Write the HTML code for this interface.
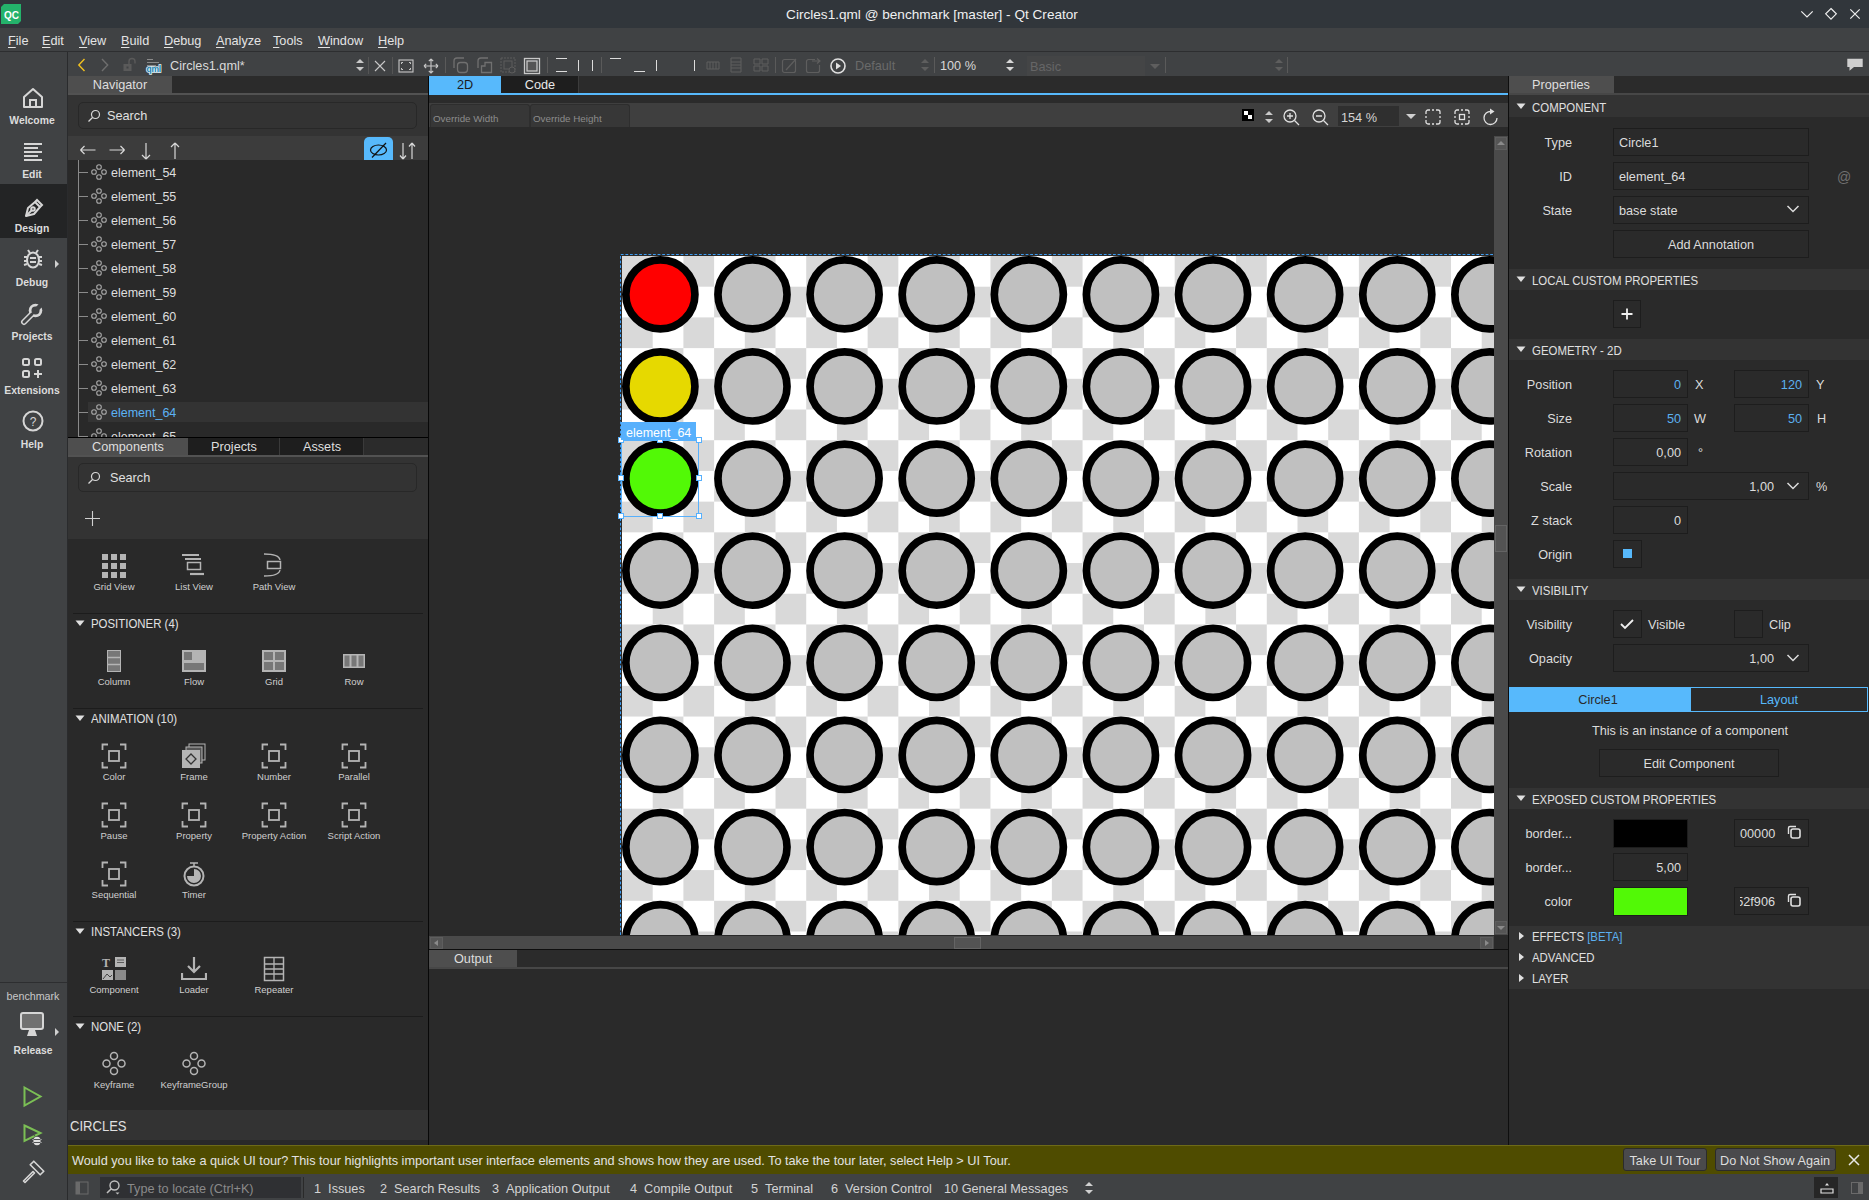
<!DOCTYPE html><html><head><meta charset="utf-8"><style>
html,body{margin:0;padding:0;width:1869px;height:1200px;overflow:hidden;background:#2a2a2a;font-family:"Liberation Sans",sans-serif;}
.a{position:absolute;}
.t{position:absolute;white-space:nowrap;line-height:20px;height:20px;}
u{text-decoration-thickness:1px;text-underline-offset:2px;}
</style></head><body>
<div class="a" style="left:0px;top:0px;width:1869px;height:28px;background:#31363b;"></div>
<svg class="a" style="left:1px;top:4px;" width="20" height="20" viewBox="0 0 20 20"><path d="M3 0 H20 V17 L17 20 H0 V3 Z" fill="#24b36b"/><text x="3" y="15" font-size="11.5" font-family="Liberation Sans" font-weight="bold" textLength="15" lengthAdjust="spacingAndGlyphs" fill="#ffffff">QC</text></svg>
<div class="t" style="left:632px;width:600px;text-align:center;top:5px;font-size:13.6px;color:#eff0f1;">Circles1.qml @ benchmark [master] - Qt Creator</div>
<svg class="a" style="left:1798px;top:8px;" width="16" height="12" viewBox="0 0 16 12"><path d="M3.3 3.3 L9 9 L14.7 3.3" stroke="#eeeeee" stroke-width="1.2" fill="none"/></svg>
<svg class="a" style="left:1822px;top:6px;" width="18" height="16" viewBox="0 0 18 16"><path d="M9 2.5 L14.3 7.8 L9 13.1 L3.7 7.8 Z" stroke="#eeeeee" stroke-width="1.2" fill="none"/></svg>
<svg class="a" style="left:1846px;top:6px;" width="18" height="16" viewBox="0 0 18 16"><path d="M4.3 3.3 L13.7 12.7 M13.7 3.3 L4.3 12.7" stroke="#eeeeee" stroke-width="1.2" fill="none"/></svg>
<div class="a" style="left:0px;top:28px;width:1869px;height:24px;background:#404244;"></div>
<div class="a" style="left:0px;top:51px;width:1869px;height:1px;background:#2d2e30;"></div>
<div class="t" style="left:8px;top:31px;font-size:12.7px;color:#e4e4e4;"><u>F</u>ile</div>
<div class="t" style="left:42px;top:31px;font-size:12.7px;color:#e4e4e4;"><u>E</u>dit</div>
<div class="t" style="left:79px;top:31px;font-size:12.7px;color:#e4e4e4;"><u>V</u>iew</div>
<div class="t" style="left:121px;top:31px;font-size:12.7px;color:#e4e4e4;"><u>B</u>uild</div>
<div class="t" style="left:164px;top:31px;font-size:12.7px;color:#e4e4e4;"><u>D</u>ebug</div>
<div class="t" style="left:216px;top:31px;font-size:12.7px;color:#e4e4e4;"><u>A</u>nalyze</div>
<div class="t" style="left:273px;top:31px;font-size:12.7px;color:#e4e4e4;"><u>T</u>ools</div>
<div class="t" style="left:318px;top:31px;font-size:12.7px;color:#e4e4e4;"><u>W</u>indow</div>
<div class="t" style="left:378px;top:31px;font-size:12.7px;color:#e4e4e4;"><u>H</u>elp</div>
<div class="a" style="left:0px;top:52px;width:1869px;height:24px;background:#404244;"></div>
<div class="a" style="left:67px;top:52px;width:1px;height:24px;background:#2d2e30;"></div>
<svg class="a" style="left:75px;top:58px;" width="14" height="14" viewBox="0 0 14 14"><path d="M9.5 1 L3.8 7 L9.5 13" stroke="#f0c020" stroke-width="1.4" fill="none"/></svg>
<svg class="a" style="left:98px;top:58px;" width="14" height="14" viewBox="0 0 14 14"><path d="M4 1 L9.7 7 L4 13" stroke="#6e6e6e" stroke-width="1.4" fill="none"/></svg>
<svg class="a" style="left:122px;top:57px;" width="16" height="16" viewBox="0 0 16 16"><rect x="1.5" y="7" width="8" height="7" fill="#5a5a5a"/><rect x="4.5" y="9.5" width="2" height="2" fill="#404244"/><path d="M7 7 V4.5 A3 3 0 0 1 13 4.5 V6.5" stroke="#5a5a5a" stroke-width="1.4" fill="none"/></svg>
<svg class="a" style="left:145px;top:57px;" width="22" height="18" viewBox="0 0 22 18"><path d="M2 2.5 H8 M2 5.5 H14 M2 8.5 H11" stroke="#8a8a8a" stroke-width="1"/><text x="1.5" y="14.5" font-size="8.5" font-weight="bold" font-family="Liberation Sans" fill="#1a7fae" stroke="#dff1f8" stroke-width="1.6" paint-order="stroke" letter-spacing="-0.3">qml</text></svg>
<div class="t" style="left:170px;top:56px;font-size:12.7px;color:#dadada;">Circles1.qml*</div>
<svg class="a" style="left:354px;top:58px;" width="12" height="14" viewBox="0 0 12 14"><path d="M6 1 L10 5 H2 Z M6 13 L10 9 H2 Z" fill="#c8c8c8"/></svg>
<div class="a" style="left:368px;top:57px;width:1px;height:17px;background:#555;"></div>
<svg class="a" style="left:373px;top:59px;" width="14" height="14" viewBox="0 0 14 14"><path d="M2 2 L12 12 M12 2 L2 12" stroke="#c8c8c8" stroke-width="1.1"/></svg>
<div class="a" style="left:392px;top:57px;width:1px;height:17px;background:#555;"></div>
<svg class="a" style="left:398px;top:59px;" width="16" height="14" viewBox="0 0 16 14"><rect x="1" y="1" width="14" height="12" stroke="#c8c8c8" stroke-width="1.1" fill="none"/><path d="M3.5 5 V3.5 H5 M11 3.5 H12.5 V5 M12.5 9 V10.5 H11 M5 10.5 H3.5 V9" stroke="#c8c8c8" stroke-width="1" fill="none"/></svg>
<svg class="a" style="left:422px;top:57px;" width="18" height="18" viewBox="0 0 18 18"><path d="M9 2 V16 M2 9 H16 M9 2 L6.8 4.2 M9 2 L11.2 4.2 M9 16 L6.8 13.8 M9 16 L11.2 13.8 M2 9 L4.2 6.8 M2 9 L4.2 11.2 M16 9 L13.8 6.8 M16 9 L13.8 11.2" stroke="#c8c8c8" stroke-width="1.1" fill="none"/></svg>
<div class="a" style="left:445px;top:57px;width:1px;height:16px;background:#5a5a5a;"></div>
<div class="a" style="left:547px;top:57px;width:1px;height:16px;background:#5a5a5a;"></div>
<div class="a" style="left:601px;top:57px;width:1px;height:16px;background:#5a5a5a;"></div>
<div class="a" style="left:775px;top:57px;width:1px;height:16px;background:#5a5a5a;"></div>
<svg class="a" style="left:452px;top:57px;" width="18" height="18" viewBox="0 0 18 18"><path d="M2 11 V4 A3 3 0 0 1 5 1 H12" stroke="#707070" stroke-width="1.3" fill="none"/><rect x="5.5" y="5.5" width="10" height="10" rx="3" stroke="#707070" stroke-width="1.3" fill="none"/></svg>
<svg class="a" style="left:476px;top:57px;" width="18" height="18" viewBox="0 0 18 18"><path d="M2 11 V4 A3 3 0 0 1 5 1 H12" stroke="#707070" stroke-width="1.3" fill="none"/><path d="M5.5 9 V15.5 H15.5 V5.5 H9 V9 Z" stroke="#707070" stroke-width="1.3" fill="none"/></svg>
<svg class="a" style="left:500px;top:57px;" width="18" height="18" viewBox="0 0 18 18"><rect x="1" y="1" width="14" height="14" stroke="#5c5c5c" stroke-width="1" fill="none" stroke-dasharray="2 1"/><rect x="4" y="4" width="8" height="8" stroke="#5c5c5c" stroke-width="1" fill="none"/><circle cx="12" cy="13" r="3" stroke="#5c5c5c" fill="#404244"/></svg>
<svg class="a" style="left:523px;top:57px;" width="18" height="18" viewBox="0 0 18 18"><rect x="1.5" y="1.5" width="15" height="15" stroke="#c8c8c8" stroke-width="1.3" fill="none"/><rect x="4" y="4" width="10" height="10" stroke="#c8c8c8" stroke-width="1.3" fill="#555"/></svg>
<svg class="a" style="left:554px;top:57px;" width="16" height="16" viewBox="0 0 16 16"><path d="M2 1.5 H13 M2 14.5 H13" stroke="#dcdcdc" stroke-width="1"/></svg>
<svg class="a" style="left:574px;top:57px;" width="24" height="16" viewBox="0 0 24 16"><path d="M4.5 3 V14 M18.5 3 V14" stroke="#dcdcdc" stroke-width="1"/></svg>
<svg class="a" style="left:608px;top:57px;" width="16" height="16" viewBox="0 0 16 16"><path d="M2 1.5 H13" stroke="#dcdcdc" stroke-width="1"/></svg>
<svg class="a" style="left:632px;top:57px;" width="16" height="16" viewBox="0 0 16 16"><path d="M2 14.5 H13" stroke="#dcdcdc" stroke-width="1"/></svg>
<svg class="a" style="left:652px;top:57px;" width="10" height="16" viewBox="0 0 10 16"><path d="M4.5 3 V14" stroke="#dcdcdc" stroke-width="1"/></svg>
<svg class="a" style="left:690px;top:57px;" width="10" height="16" viewBox="0 0 10 16"><path d="M4.5 3 V14" stroke="#dcdcdc" stroke-width="1"/></svg>
<svg class="a" style="left:706px;top:59px;" width="14" height="12" viewBox="0 0 14 12"><path d="M1 3 H13 V10 H1 Z M4 3 V10 M7 3 V10 M10 3 V10" stroke="#5e5e5e" stroke-width="1" fill="none"/></svg>
<svg class="a" style="left:729px;top:57px;" width="14" height="16" viewBox="0 0 14 16"><path d="M2 1 H12 V15 H2 Z M2 5 H12 M2 8 H12 M2 11 H12" stroke="#5e5e5e" stroke-width="1" fill="none"/></svg>
<svg class="a" style="left:753px;top:58px;" width="16" height="14" viewBox="0 0 16 14"><path d="M1 1 H7 V6 H1 Z M9 1 H15 V6 H9 Z M1 8 H7 V13 H1 Z M9 8 H15 V13 H9 Z" stroke="#5e5e5e" stroke-width="1" fill="none"/></svg>
<svg class="a" style="left:781px;top:57px;" width="18" height="18" viewBox="0 0 18 18"><rect x="1.5" y="2.5" width="13" height="13" rx="2" stroke="#5e5e5e" stroke-width="1.2" fill="none"/><path d="M5 13 L15 2" stroke="#5e5e5e" stroke-width="1.2"/></svg>
<svg class="a" style="left:805px;top:57px;" width="18" height="18" viewBox="0 0 18 18"><path d="M10 2.5 H3.5 A2 2 0 0 0 1.5 4.5 V13.5 A2 2 0 0 0 3.5 15.5 H12.5 A2 2 0 0 0 14.5 13.5 V8 M7 4 H15 M12 1.5 L15 4 L12 6.5" stroke="#5e5e5e" stroke-width="1.2" fill="none"/></svg>
<svg class="a" style="left:829px;top:57px;" width="18" height="18" viewBox="0 0 18 18"><circle cx="9" cy="9" r="7" stroke="#e0e0e0" stroke-width="1.6" fill="none"/><path d="M7 5.5 L12 9 L7 12.5 Z" fill="#e0e0e0"/></svg>
<div class="t" style="left:855px;top:56px;font-size:12.7px;color:#6a6a6a;">Default</div>
<svg class="a" style="left:920px;top:58px;" width="10" height="14" viewBox="0 0 10 14"><path d="M5 1 L9 5 H1 Z M5 13 L9 9 H1 Z" fill="#5e5e5e"/></svg>
<div class="a" style="left:934px;top:57px;width:1px;height:16px;background:#5a5a5a;"></div>
<div class="t" style="left:940px;top:56px;font-size:12.7px;color:#d8d8d8;">100 %</div>
<svg class="a" style="left:1005px;top:58px;" width="10" height="14" viewBox="0 0 10 14"><path d="M5 1 L9 5 H1 Z M5 13 L9 9 H1 Z" fill="#d8d8d8"/></svg>
<div class="a" style="left:1027px;top:56px;width:118px;height:20px;background:#444546;"></div>
<div class="t" style="left:1030px;top:57px;font-size:12.7px;color:#666;">Basic</div>
<svg class="a" style="left:1150px;top:64px;" width="10" height="6" viewBox="0 0 10 6"><path d="M0 0 H10 L5 5 Z" fill="#5e5e5e"/></svg>
<div class="a" style="left:1165px;top:57px;width:1px;height:16px;background:#5a5a5a;"></div>
<svg class="a" style="left:1274px;top:58px;" width="10" height="14" viewBox="0 0 10 14"><path d="M5 1 L9 5 H1 Z M5 13 L9 9 H1 Z" fill="#5e5e5e"/></svg>
<div class="a" style="left:1287px;top:57px;width:1px;height:16px;background:#5a5a5a;"></div>
<svg class="a" style="left:1846px;top:57px;" width="18" height="16" viewBox="0 0 18 16"><path d="M1.3 1.7 H16.7 V10 H8 L3.5 13.7 V10 H1.3 Z" fill="#cfcfcf"/></svg>
<div class="a" style="left:0px;top:76px;width:67px;height:1124px;background:#404244;"></div>
<div class="a" style="left:67px;top:52px;width:1px;height:1148px;background:#2a2b2d;"></div>
<div class="a" style="left:0px;top:184px;width:67px;height:54px;background:#232425;"></div>
<div class="t" style="left:-268px;width:600px;text-align:center;top:111px;font-size:10.4px;color:#dcdcdc;font-weight:bold;">Welcome</div>
<div class="t" style="left:-268px;width:600px;text-align:center;top:165px;font-size:10.4px;color:#dcdcdc;font-weight:bold;">Edit</div>
<div class="t" style="left:-268px;width:600px;text-align:center;top:219px;font-size:10.4px;color:#dcdcdc;font-weight:bold;">Design</div>
<div class="t" style="left:-268px;width:600px;text-align:center;top:273px;font-size:10.4px;color:#dcdcdc;font-weight:bold;">Debug</div>
<div class="t" style="left:-268px;width:600px;text-align:center;top:327px;font-size:10.4px;color:#dcdcdc;font-weight:bold;">Projects</div>
<div class="t" style="left:-268px;width:600px;text-align:center;top:381px;font-size:10.4px;color:#dcdcdc;font-weight:bold;">Extensions</div>
<div class="t" style="left:-268px;width:600px;text-align:center;top:435px;font-size:10.4px;color:#dcdcdc;font-weight:bold;">Help</div>
<svg class="a" style="left:22px;top:87px;" width="22" height="22" viewBox="0 0 22 22"><path d="M2 10 L11 2 L20 10 V20 H2 Z" stroke="#d6d6d6" stroke-width="2" fill="none" stroke-linejoin="round"/><path d="M8 20 V13 H14 V20" stroke="#d6d6d6" stroke-width="2" fill="none"/></svg>
<svg class="a" style="left:22px;top:141px;" width="22" height="22" viewBox="0 0 22 22"><path d="M2 3 H20 M2 7 H16 M2 11 H20 M2 15 H16 M2 19 H20" stroke="#d6d6d6" stroke-width="2" fill="none"/></svg>
<svg class="a" style="left:22px;top:197px;" width="22" height="22" viewBox="0 0 22 22"><path d="M4 19 L6 11 L13 5 L18 10 L12 17 Z" stroke="#d6d6d6" stroke-width="2" fill="none" stroke-linejoin="round"/><path d="M13 5 L15 3 L20 8 L18 10" stroke="#d6d6d6" stroke-width="2" fill="none"/><circle cx="11" cy="12" r="1.8" stroke="#d6d6d6" stroke-width="2" fill="none"/><path d="M4 19 L10 13" stroke="#d6d6d6" stroke-width="2" fill="none" stroke-width="1.3"/></svg>
<svg class="a" style="left:22px;top:248px;" width="22" height="22" viewBox="0 0 22 22"><ellipse cx="11" cy="12" rx="6" ry="7.5" stroke="#d6d6d6" stroke-width="2" fill="none"/><path d="M8 5 L6 2 M14 5 L16 2 M2 9 H5 M17 9 H20 M2 13 H5 M17 13 H20 M2 17 L5 16 M20 17 L17 16 M8 10 H14 M8 14 H14" stroke="#d6d6d6" stroke-width="2" fill="none" stroke-width="1.6"/></svg>
<svg class="a" style="left:54px;top:259px;" width="6" height="10" viewBox="0 0 6 10"><path d="M1 1 L5 5 L1 9 Z" fill="#d0d0d0"/></svg>
<svg class="a" style="left:20px;top:302px;" width="24" height="24" viewBox="0 0 24 24"><path d="M4 20 L12 12" stroke="#d6d6d6" stroke-width="6" stroke-linecap="round"/><circle cx="15.5" cy="8.5" r="6.8" fill="#d6d6d6"/><path d="M4 20 L12 12" stroke="#404244" stroke-width="3" stroke-linecap="round"/><circle cx="15.5" cy="8.5" r="4" fill="#404244"/><path d="M15.5 8.5 L23 1" stroke="#404244" stroke-width="4.5"/></svg>
<svg class="a" style="left:21px;top:357px;" width="24" height="24" viewBox="0 0 24 24"><rect x="2" y="2" width="6" height="6" rx="1.5" stroke="#d6d6d6" stroke-width="2" fill="none"/><rect x="14" y="2" width="6" height="6" rx="1.5" stroke="#d6d6d6" stroke-width="2" fill="none"/><rect x="2" y="14" width="6" height="6" rx="1.5" stroke="#d6d6d6" stroke-width="2" fill="none"/><path d="M17 13 V21 M13 17 H21" stroke="#d6d6d6" stroke-width="2" fill="none"/></svg>
<svg class="a" style="left:22px;top:410px;" width="22" height="22" viewBox="0 0 22 22"><circle cx="11" cy="11" r="9.5" stroke="#d6d6d6" stroke-width="2" fill="none"/><text x="11" y="15.5" font-size="12" font-family="Liberation Sans" fill="#d6d6d6" text-anchor="middle">?</text></svg>
<div class="a" style="left:0px;top:982px;width:67px;height:1px;background:#2d2e30;"></div>
<div class="t" style="left:-267px;width:600px;text-align:center;top:986px;font-size:10.7px;color:#c8c8c8;">benchmark</div>
<svg class="a" style="left:19px;top:1011px;" width="28" height="28" viewBox="0 0 28 28"><rect x="2" y="2" width="22" height="16" rx="2" fill="#707070" stroke="#d6d6d6" stroke-width="2"/><path d="M10 19 L8 25 H18 L16 19 Z" fill="#d6d6d6"/></svg>
<svg class="a" style="left:54px;top:1027px;" width="6" height="10" viewBox="0 0 6 10"><path d="M1 1 L5 5 L1 9 Z" fill="#d0d0d0"/></svg>
<div class="t" style="left:-267px;width:600px;text-align:center;top:1041px;font-size:10.3px;color:#dcdcdc;font-weight:bold;">Release</div>
<svg class="a" style="left:22px;top:1085px;" width="24" height="24" viewBox="0 0 24 24"><path d="M2.5 2.5 L18.5 11.5 L2.5 20.5 Z" stroke="#7bbf55" stroke-width="2" fill="none" stroke-linejoin="miter"/></svg>
<svg class="a" style="left:22px;top:1123px;" width="24" height="24" viewBox="0 0 24 24"><path d="M2.5 2.5 L18.5 10 L2.5 18 Z" stroke="#7bbf55" stroke-width="2" fill="none" stroke-linejoin="miter"/><ellipse cx="15" cy="18" rx="3.6" ry="4.2" fill="#e0e0e0"/><path d="M11 16.5 H19 M11 19.5 H19 M13 13.5 L12 12 M17 13.5 L18 12" stroke="#404244" stroke-width="0.9"/><path d="M10.5 16.5 H11.5 M18.5 16.5 H19.5 M10.5 19.5 H11.5 M18.5 19.5 H19.5" stroke="#e0e0e0" stroke-width="0.9"/></svg>
<svg class="a" style="left:20px;top:1160px;" width="26" height="26" viewBox="0 0 26 26"><path d="M3.5 21 L5 22.5 L14.5 13 L13 11.5 Z" stroke="#d6d6d6" stroke-width="1.6" fill="none" stroke-linejoin="round"/><path d="M10.2 4.8 L13.8 1.2 L23.8 11.2 L20.2 14.8 Z" stroke="#d6d6d6" stroke-width="1.6" fill="none" stroke-linejoin="round"/></svg>
<div class="a" style="left:68px;top:76px;width:360px;height:17px;background:#2b2b2b;"></div>
<div class="a" style="left:68px;top:93px;width:360px;height:2px;background:#525252;"></div>
<div class="a" style="left:68px;top:76px;width:104px;height:17px;background:#4e4e4e;"></div>
<div class="t" style="left:-180px;width:600px;text-align:center;top:75px;font-size:12.7px;color:#dedede;">Navigator</div>
<div class="a" style="left:68px;top:95px;width:360px;height:41px;background:#333333;"></div>
<div class="a" style="left:78px;top:102px;width:339px;height:27px;background:#333333;border:1px solid #282828;border-radius:5px;box-sizing:border-box;"></div>
<svg class="a" style="left:87px;top:109px;" width="14" height="14" viewBox="0 0 14 14"><circle cx="8.5" cy="5.5" r="4" stroke="#d8d8d8" stroke-width="1.2" fill="none"/><path d="M5.5 8.5 L1.5 12.5" stroke="#d8d8d8" stroke-width="1.2"/></svg>
<div class="t" style="left:107px;top:106px;font-size:12.7px;color:#e0e0e0;">Search</div>
<div class="a" style="left:68px;top:136px;width:360px;height:24px;background:#3c3c3c;"></div>
<svg class="a" style="left:79px;top:143px;" width="18" height="14" viewBox="0 0 18 14"><path d="M1.5 7 H16.5 M1.5 7 L5.5 3 M1.5 7 L5.5 11" stroke="#d8d8d8" stroke-width="1.2" fill="none"/></svg>
<svg class="a" style="left:108px;top:143px;" width="18" height="14" viewBox="0 0 18 14"><path d="M1.5 7 H16.5 M16.5 7 L12.5 3 M16.5 7 L12.5 11" stroke="#d8d8d8" stroke-width="1.2" fill="none"/></svg>
<svg class="a" style="left:139px;top:142px;" width="14" height="18" viewBox="0 0 14 18"><path d="M7 1 V17 M7 17 L3 13 M7 17 L11 13" stroke="#d8d8d8" stroke-width="1.2" fill="none"/></svg>
<svg class="a" style="left:168px;top:142px;" width="14" height="18" viewBox="0 0 14 18"><path d="M7 1 V17 M7 1 L3 5 M7 1 L11 5" stroke="#d8d8d8" stroke-width="1.2" fill="none"/></svg>
<div class="a" style="left:364px;top:137px;width:29px;height:23px;background:#57b9fc;border-radius:5px 5px 0 0;"></div>
<svg class="a" style="left:366px;top:140px;" width="25" height="20" viewBox="0 0 25 20"><ellipse cx="12.5" cy="10" rx="8" ry="5" stroke="#111" stroke-width="1.2" fill="none"/><path d="M6 17.5 L20 3" stroke="#111" stroke-width="1.2"/></svg>
<svg class="a" style="left:398px;top:142px;" width="20" height="18" viewBox="0 0 20 18"><path d="M5 1 V17 M5 17 L2 13.5 M5 17 L8 13.5 M14 17 V1 M14 1 L11 4.5 M14 1 L17 4.5" stroke="#d8d8d8" stroke-width="1.2" fill="none"/></svg>
<div class="a" style="left:68px;top:160px;width:360px;height:277px;background:#292929;"></div>
<div class="a" style="left:78px;top:160px;width:1px;height:277px;background:#8a8a8a;"></div>
<div class="a" style="left:88px;top:402px;width:340px;height:20px;background:#333333;"></div>
<div class="a" style="left:68px;top:160px;width:360px;height:277px;overflow:hidden;">
<div class="a" style="left:11px;top:12px;width:9px;height:1px;background:#8a8a8a"></div>
<svg class="a" style="left:23px;top:4px" width="16" height="16" viewBox="0 0 16 16"><circle cx="8" cy="3" r="2.3" stroke="#a8a8a8" stroke-width="1.1" fill="none"/><circle cx="3" cy="8" r="2.3" stroke="#a8a8a8" stroke-width="1.1" fill="none"/><circle cx="13" cy="8" r="2.3" stroke="#a8a8a8" stroke-width="1.1" fill="none"/><circle cx="8" cy="13" r="2.3" stroke="#a8a8a8" stroke-width="1.1" fill="none"/></svg>
<div class="t" style="left:43px;top:3px;font-size:12.5px;color:#dedede;">element_54</div>
<div class="a" style="left:11px;top:36px;width:9px;height:1px;background:#8a8a8a"></div>
<svg class="a" style="left:23px;top:28px" width="16" height="16" viewBox="0 0 16 16"><circle cx="8" cy="3" r="2.3" stroke="#a8a8a8" stroke-width="1.1" fill="none"/><circle cx="3" cy="8" r="2.3" stroke="#a8a8a8" stroke-width="1.1" fill="none"/><circle cx="13" cy="8" r="2.3" stroke="#a8a8a8" stroke-width="1.1" fill="none"/><circle cx="8" cy="13" r="2.3" stroke="#a8a8a8" stroke-width="1.1" fill="none"/></svg>
<div class="t" style="left:43px;top:27px;font-size:12.5px;color:#dedede;">element_55</div>
<div class="a" style="left:11px;top:60px;width:9px;height:1px;background:#8a8a8a"></div>
<svg class="a" style="left:23px;top:52px" width="16" height="16" viewBox="0 0 16 16"><circle cx="8" cy="3" r="2.3" stroke="#a8a8a8" stroke-width="1.1" fill="none"/><circle cx="3" cy="8" r="2.3" stroke="#a8a8a8" stroke-width="1.1" fill="none"/><circle cx="13" cy="8" r="2.3" stroke="#a8a8a8" stroke-width="1.1" fill="none"/><circle cx="8" cy="13" r="2.3" stroke="#a8a8a8" stroke-width="1.1" fill="none"/></svg>
<div class="t" style="left:43px;top:51px;font-size:12.5px;color:#dedede;">element_56</div>
<div class="a" style="left:11px;top:84px;width:9px;height:1px;background:#8a8a8a"></div>
<svg class="a" style="left:23px;top:76px" width="16" height="16" viewBox="0 0 16 16"><circle cx="8" cy="3" r="2.3" stroke="#a8a8a8" stroke-width="1.1" fill="none"/><circle cx="3" cy="8" r="2.3" stroke="#a8a8a8" stroke-width="1.1" fill="none"/><circle cx="13" cy="8" r="2.3" stroke="#a8a8a8" stroke-width="1.1" fill="none"/><circle cx="8" cy="13" r="2.3" stroke="#a8a8a8" stroke-width="1.1" fill="none"/></svg>
<div class="t" style="left:43px;top:75px;font-size:12.5px;color:#dedede;">element_57</div>
<div class="a" style="left:11px;top:108px;width:9px;height:1px;background:#8a8a8a"></div>
<svg class="a" style="left:23px;top:100px" width="16" height="16" viewBox="0 0 16 16"><circle cx="8" cy="3" r="2.3" stroke="#a8a8a8" stroke-width="1.1" fill="none"/><circle cx="3" cy="8" r="2.3" stroke="#a8a8a8" stroke-width="1.1" fill="none"/><circle cx="13" cy="8" r="2.3" stroke="#a8a8a8" stroke-width="1.1" fill="none"/><circle cx="8" cy="13" r="2.3" stroke="#a8a8a8" stroke-width="1.1" fill="none"/></svg>
<div class="t" style="left:43px;top:99px;font-size:12.5px;color:#dedede;">element_58</div>
<div class="a" style="left:11px;top:132px;width:9px;height:1px;background:#8a8a8a"></div>
<svg class="a" style="left:23px;top:124px" width="16" height="16" viewBox="0 0 16 16"><circle cx="8" cy="3" r="2.3" stroke="#a8a8a8" stroke-width="1.1" fill="none"/><circle cx="3" cy="8" r="2.3" stroke="#a8a8a8" stroke-width="1.1" fill="none"/><circle cx="13" cy="8" r="2.3" stroke="#a8a8a8" stroke-width="1.1" fill="none"/><circle cx="8" cy="13" r="2.3" stroke="#a8a8a8" stroke-width="1.1" fill="none"/></svg>
<div class="t" style="left:43px;top:123px;font-size:12.5px;color:#dedede;">element_59</div>
<div class="a" style="left:11px;top:156px;width:9px;height:1px;background:#8a8a8a"></div>
<svg class="a" style="left:23px;top:148px" width="16" height="16" viewBox="0 0 16 16"><circle cx="8" cy="3" r="2.3" stroke="#a8a8a8" stroke-width="1.1" fill="none"/><circle cx="3" cy="8" r="2.3" stroke="#a8a8a8" stroke-width="1.1" fill="none"/><circle cx="13" cy="8" r="2.3" stroke="#a8a8a8" stroke-width="1.1" fill="none"/><circle cx="8" cy="13" r="2.3" stroke="#a8a8a8" stroke-width="1.1" fill="none"/></svg>
<div class="t" style="left:43px;top:147px;font-size:12.5px;color:#dedede;">element_60</div>
<div class="a" style="left:11px;top:180px;width:9px;height:1px;background:#8a8a8a"></div>
<svg class="a" style="left:23px;top:172px" width="16" height="16" viewBox="0 0 16 16"><circle cx="8" cy="3" r="2.3" stroke="#a8a8a8" stroke-width="1.1" fill="none"/><circle cx="3" cy="8" r="2.3" stroke="#a8a8a8" stroke-width="1.1" fill="none"/><circle cx="13" cy="8" r="2.3" stroke="#a8a8a8" stroke-width="1.1" fill="none"/><circle cx="8" cy="13" r="2.3" stroke="#a8a8a8" stroke-width="1.1" fill="none"/></svg>
<div class="t" style="left:43px;top:171px;font-size:12.5px;color:#dedede;">element_61</div>
<div class="a" style="left:11px;top:204px;width:9px;height:1px;background:#8a8a8a"></div>
<svg class="a" style="left:23px;top:196px" width="16" height="16" viewBox="0 0 16 16"><circle cx="8" cy="3" r="2.3" stroke="#a8a8a8" stroke-width="1.1" fill="none"/><circle cx="3" cy="8" r="2.3" stroke="#a8a8a8" stroke-width="1.1" fill="none"/><circle cx="13" cy="8" r="2.3" stroke="#a8a8a8" stroke-width="1.1" fill="none"/><circle cx="8" cy="13" r="2.3" stroke="#a8a8a8" stroke-width="1.1" fill="none"/></svg>
<div class="t" style="left:43px;top:195px;font-size:12.5px;color:#dedede;">element_62</div>
<div class="a" style="left:11px;top:228px;width:9px;height:1px;background:#8a8a8a"></div>
<svg class="a" style="left:23px;top:220px" width="16" height="16" viewBox="0 0 16 16"><circle cx="8" cy="3" r="2.3" stroke="#a8a8a8" stroke-width="1.1" fill="none"/><circle cx="3" cy="8" r="2.3" stroke="#a8a8a8" stroke-width="1.1" fill="none"/><circle cx="13" cy="8" r="2.3" stroke="#a8a8a8" stroke-width="1.1" fill="none"/><circle cx="8" cy="13" r="2.3" stroke="#a8a8a8" stroke-width="1.1" fill="none"/></svg>
<div class="t" style="left:43px;top:219px;font-size:12.5px;color:#dedede;">element_63</div>
<div class="a" style="left:11px;top:252px;width:9px;height:1px;background:#8a8a8a"></div>
<svg class="a" style="left:23px;top:244px" width="16" height="16" viewBox="0 0 16 16"><circle cx="8" cy="3" r="2.3" stroke="#a8a8a8" stroke-width="1.1" fill="none"/><circle cx="3" cy="8" r="2.3" stroke="#a8a8a8" stroke-width="1.1" fill="none"/><circle cx="13" cy="8" r="2.3" stroke="#a8a8a8" stroke-width="1.1" fill="none"/><circle cx="8" cy="13" r="2.3" stroke="#a8a8a8" stroke-width="1.1" fill="none"/></svg>
<div class="t" style="left:43px;top:243px;font-size:12.5px;color:#5cb2f5;">element_64</div>
<div class="a" style="left:11px;top:276px;width:9px;height:1px;background:#8a8a8a"></div>
<svg class="a" style="left:23px;top:268px" width="16" height="16" viewBox="0 0 16 16"><circle cx="8" cy="3" r="2.3" stroke="#a8a8a8" stroke-width="1.1" fill="none"/><circle cx="3" cy="8" r="2.3" stroke="#a8a8a8" stroke-width="1.1" fill="none"/><circle cx="13" cy="8" r="2.3" stroke="#a8a8a8" stroke-width="1.1" fill="none"/><circle cx="8" cy="13" r="2.3" stroke="#a8a8a8" stroke-width="1.1" fill="none"/></svg>
<div class="t" style="left:43px;top:267px;font-size:12.5px;color:#dedede;">element_65</div>
</div>
<div class="a" style="left:68px;top:437px;width:360px;height:1px;background:#000000;"></div>
<div class="a" style="left:68px;top:438px;width:360px;height:17px;background:#2b2b2b;"></div>
<div class="a" style="left:68px;top:455px;width:360px;height:2px;background:#525252;"></div>
<div class="a" style="left:68px;top:438px;width:120px;height:17px;background:#4e4e4e;"></div>
<div class="a" style="left:188px;top:438px;width:176px;height:17px;background:#1e1e1e;"></div>
<div class="a" style="left:279px;top:438px;width:1px;height:17px;background:#3a3a3a;"></div>
<div class="a" style="left:363px;top:438px;width:1px;height:17px;background:#3a3a3a;"></div>
<div class="t" style="left:-172px;width:600px;text-align:center;top:437px;font-size:12.7px;color:#dedede;">Components</div>
<div class="t" style="left:-66px;width:600px;text-align:center;top:437px;font-size:12.7px;color:#dedede;">Projects</div>
<div class="t" style="left:22px;width:600px;text-align:center;top:437px;font-size:12.7px;color:#dedede;">Assets</div>
<div class="a" style="left:68px;top:457px;width:360px;height:82px;background:#333333;"></div>
<div class="a" style="left:78px;top:463px;width:339px;height:29px;background:#333333;border:1px solid #282828;border-radius:5px;box-sizing:border-box;"></div>
<svg class="a" style="left:87px;top:471px;" width="14" height="14" viewBox="0 0 14 14"><circle cx="8.5" cy="5.5" r="4" stroke="#d8d8d8" stroke-width="1.2" fill="none"/><path d="M5.5 8.5 L1.5 12.5" stroke="#d8d8d8" stroke-width="1.2"/></svg>
<div class="t" style="left:110px;top:468px;font-size:12.7px;color:#e0e0e0;">Search</div>
<svg class="a" style="left:84px;top:510px;" width="17" height="17" viewBox="0 0 17 17"><path d="M8.5 1 V16 M1 8.5 H16" stroke="#d0d0d0" stroke-width="1.1"/></svg>
<div class="a" style="left:68px;top:539px;width:360px;height:571px;background:#292929;"></div>
<svg class="a" style="left:101px;top:553px" width="26" height="26" viewBox="0 0 26 26"><rect x="1" y="1" width="6" height="6" fill="#b4b4b4"/><rect x="10" y="1" width="6" height="6" fill="#b4b4b4"/><rect x="19" y="1" width="6" height="6" fill="#b4b4b4"/><rect x="1" y="10" width="6" height="6" fill="#b4b4b4"/><rect x="10" y="10" width="6" height="6" fill="#b4b4b4"/><rect x="19" y="10" width="6" height="6" fill="#b4b4b4"/><rect x="1" y="19" width="6" height="6" fill="#b4b4b4"/><rect x="10" y="19" width="6" height="6" fill="#b4b4b4"/><rect x="19" y="19" width="6" height="6" fill="#b4b4b4"/></svg>
<div class="t" style="left:-186px;width:600px;text-align:center;top:577px;font-size:9.5px;color:#cfcfcf;">Grid View</div>
<svg class="a" style="left:181px;top:553px" width="26" height="26" viewBox="0 0 26 26"><path d="M1 2 H18 M4 6 H20" stroke="#b4b4b4" stroke-width="2"/><rect x="6.5" y="9.5" width="13" height="7" stroke="#b4b4b4" stroke-width="1.5" fill="none"/><path d="M9 21 H23" stroke="#b4b4b4" stroke-width="2.2"/></svg>
<div class="t" style="left:-106px;width:600px;text-align:center;top:577px;font-size:9.5px;color:#cfcfcf;">List View</div>
<svg class="a" style="left:261px;top:553px" width="26" height="26" viewBox="0 0 26 26"><path d="M3 1 Q18 1 19 7 M3 23 Q18 23 19 17" stroke="#b4b4b4" stroke-width="1.4" fill="none"/><rect x="6.5" y="8.5" width="13" height="7" stroke="#b4b4b4" stroke-width="1.5" fill="none"/></svg>
<div class="t" style="left:-26px;width:600px;text-align:center;top:577px;font-size:9.5px;color:#cfcfcf;">Path View</div>
<div class="a" style="left:73px;top:613px;width:350px;height:1px;background:#1c1c1c;"></div>
<svg class="a" style="left:75px;top:620px;" width="10" height="7" viewBox="0 0 10 7"><path d="M0.5 0.5 H9.5 L5 6 Z" fill="#e0e0e0"/></svg>
<div class="t" style="left:91px;top:614px;font-size:12.7px;color:#e2e2e2;transform:scaleX(0.9);transform-origin:0 0;">POSITIONER (4)</div>
<svg class="a" style="left:101px;top:649px" width="26" height="24" viewBox="0 0 26 24"><rect x="6.5" y="1.5" width="13" height="21" stroke="#b4b4b4" fill="#777"/><path d="M7 8.5 H19 M7 15.5 H19" stroke="#b4b4b4" stroke-width="1.5"/></svg>
<div class="t" style="left:-186px;width:600px;text-align:center;top:672px;font-size:9.5px;color:#cfcfcf;">Column</div>
<svg class="a" style="left:181px;top:649px" width="26" height="24" viewBox="0 0 26 24"><rect x="1" y="1" width="24" height="22" fill="#b4b4b4"/><rect x="3" y="3" width="8" height="8" fill="#777"/><rect x="3" y="14" width="20" height="7" fill="#777"/></svg>
<div class="t" style="left:-106px;width:600px;text-align:center;top:672px;font-size:9.5px;color:#cfcfcf;">Flow</div>
<svg class="a" style="left:261px;top:649px" width="26" height="24" viewBox="0 0 26 24"><rect x="1" y="1" width="24" height="22" fill="#b4b4b4"/><rect x="3" y="3" width="9" height="8" fill="#777"/><rect x="14" y="3" width="9" height="8" fill="#777"/><rect x="3" y="13" width="9" height="8" fill="#777"/><rect x="14" y="13" width="9" height="8" fill="#777"/></svg>
<div class="t" style="left:-26px;width:600px;text-align:center;top:672px;font-size:9.5px;color:#cfcfcf;">Grid</div>
<svg class="a" style="left:341px;top:649px" width="26" height="24" viewBox="0 0 26 24"><rect x="2" y="5" width="22" height="14" fill="#b4b4b4"/><rect x="3.5" y="6.5" width="5" height="11" fill="#777"/><rect x="10.5" y="6.5" width="5" height="11" fill="#777"/><rect x="17.5" y="6.5" width="5" height="11" fill="#777"/></svg>
<div class="t" style="left:54px;width:600px;text-align:center;top:672px;font-size:9.5px;color:#cfcfcf;">Row</div>
<div class="a" style="left:73px;top:708px;width:350px;height:1px;background:#1c1c1c;"></div>
<svg class="a" style="left:75px;top:715px;" width="10" height="7" viewBox="0 0 10 7"><path d="M0.5 0.5 H9.5 L5 6 Z" fill="#e0e0e0"/></svg>
<div class="t" style="left:91px;top:709px;font-size:12.7px;color:#e2e2e2;transform:scaleX(0.9);transform-origin:0 0;">ANIMATION (10)</div>
<svg class="a" style="left:101px;top:743px" width="26" height="26" viewBox="0 0 26 26"><path d="M1.5 7 V1.5 H7 M19 1.5 H24.5 V7 M24.5 19 V24.5 H19 M7 24.5 H1.5 V19" stroke="#b4b4b4" stroke-width="1.8" fill="none"/><rect x="8" y="8" width="10" height="10" stroke="#b4b4b4" stroke-width="1.8" fill="none"/></svg>
<div class="t" style="left:-186px;width:600px;text-align:center;top:767px;font-size:9.5px;color:#cfcfcf;">Color</div>
<svg class="a" style="left:181px;top:743px" width="26" height="26" viewBox="0 0 26 26"><rect x="8" y="1" width="16" height="16" fill="none" stroke="#b4b4b4"/><rect x="5" y="4" width="16" height="16" fill="#555" stroke="#b4b4b4"/><rect x="1" y="7" width="18" height="18" fill="#b4b4b4"/><path d="M10 11 L15 16 L10 21 L5 16 Z" stroke="#333" stroke-width="1.3" fill="none"/></svg>
<div class="t" style="left:-106px;width:600px;text-align:center;top:767px;font-size:9.5px;color:#cfcfcf;">Frame</div>
<svg class="a" style="left:261px;top:743px" width="26" height="26" viewBox="0 0 26 26"><path d="M1.5 7 V1.5 H7 M19 1.5 H24.5 V7 M24.5 19 V24.5 H19 M7 24.5 H1.5 V19" stroke="#b4b4b4" stroke-width="1.8" fill="none"/><rect x="8" y="8" width="10" height="10" stroke="#b4b4b4" stroke-width="1.8" fill="none"/></svg>
<div class="t" style="left:-26px;width:600px;text-align:center;top:767px;font-size:9.5px;color:#cfcfcf;">Number</div>
<svg class="a" style="left:341px;top:743px" width="26" height="26" viewBox="0 0 26 26"><path d="M1.5 7 V1.5 H7 M19 1.5 H24.5 V7 M24.5 19 V24.5 H19 M7 24.5 H1.5 V19" stroke="#b4b4b4" stroke-width="1.8" fill="none"/><rect x="8" y="8" width="10" height="10" stroke="#b4b4b4" stroke-width="1.8" fill="none"/></svg>
<div class="t" style="left:54px;width:600px;text-align:center;top:767px;font-size:9.5px;color:#cfcfcf;">Parallel</div>
<svg class="a" style="left:101px;top:802px" width="26" height="26" viewBox="0 0 26 26"><path d="M1.5 7 V1.5 H7 M19 1.5 H24.5 V7 M24.5 19 V24.5 H19 M7 24.5 H1.5 V19" stroke="#b4b4b4" stroke-width="1.8" fill="none"/><rect x="8" y="8" width="10" height="10" stroke="#b4b4b4" stroke-width="1.8" fill="none"/></svg>
<div class="t" style="left:-186px;width:600px;text-align:center;top:826px;font-size:9.5px;color:#cfcfcf;">Pause</div>
<svg class="a" style="left:181px;top:802px" width="26" height="26" viewBox="0 0 26 26"><path d="M1.5 7 V1.5 H7 M19 1.5 H24.5 V7 M24.5 19 V24.5 H19 M7 24.5 H1.5 V19" stroke="#b4b4b4" stroke-width="1.8" fill="none"/><rect x="8" y="8" width="10" height="10" stroke="#b4b4b4" stroke-width="1.8" fill="none"/></svg>
<div class="t" style="left:-106px;width:600px;text-align:center;top:826px;font-size:9.5px;color:#cfcfcf;">Property</div>
<svg class="a" style="left:261px;top:802px" width="26" height="26" viewBox="0 0 26 26"><path d="M1.5 7 V1.5 H7 M19 1.5 H24.5 V7 M24.5 19 V24.5 H19 M7 24.5 H1.5 V19" stroke="#b4b4b4" stroke-width="1.8" fill="none"/><rect x="8" y="8" width="10" height="10" stroke="#b4b4b4" stroke-width="1.8" fill="none"/></svg>
<div class="t" style="left:-26px;width:600px;text-align:center;top:826px;font-size:9.5px;color:#cfcfcf;">Property Action</div>
<svg class="a" style="left:341px;top:802px" width="26" height="26" viewBox="0 0 26 26"><path d="M1.5 7 V1.5 H7 M19 1.5 H24.5 V7 M24.5 19 V24.5 H19 M7 24.5 H1.5 V19" stroke="#b4b4b4" stroke-width="1.8" fill="none"/><rect x="8" y="8" width="10" height="10" stroke="#b4b4b4" stroke-width="1.8" fill="none"/></svg>
<div class="t" style="left:54px;width:600px;text-align:center;top:826px;font-size:9.5px;color:#cfcfcf;">Script Action</div>
<svg class="a" style="left:101px;top:861px" width="26" height="26" viewBox="0 0 26 26"><path d="M1.5 7 V1.5 H7 M19 1.5 H24.5 V7 M24.5 19 V24.5 H19 M7 24.5 H1.5 V19" stroke="#b4b4b4" stroke-width="1.8" fill="none"/><rect x="8" y="8" width="10" height="10" stroke="#b4b4b4" stroke-width="1.8" fill="none"/></svg>
<div class="t" style="left:-186px;width:600px;text-align:center;top:885px;font-size:9.5px;color:#cfcfcf;">Sequential</div>
<svg class="a" style="left:181px;top:861px" width="26" height="26" viewBox="0 0 26 26"><path d="M9 2 H17 M13 2 V5" stroke="#b4b4b4" stroke-width="1.5"/><circle cx="13" cy="15" r="9.5" stroke="#b4b4b4" stroke-width="2" fill="none"/><path d="M13 15 V8 A7 7 0 1 1 6 15 Z" fill="#b4b4b4"/></svg>
<div class="t" style="left:-106px;width:600px;text-align:center;top:885px;font-size:9.5px;color:#cfcfcf;">Timer</div>
<div class="a" style="left:73px;top:921px;width:350px;height:1px;background:#1c1c1c;"></div>
<svg class="a" style="left:75px;top:928px;" width="10" height="7" viewBox="0 0 10 7"><path d="M0.5 0.5 H9.5 L5 6 Z" fill="#e0e0e0"/></svg>
<div class="t" style="left:91px;top:922px;font-size:12.7px;color:#e2e2e2;transform:scaleX(0.9);transform-origin:0 0;">INSTANCERS (3)</div>
<svg class="a" style="left:101px;top:956px" width="26" height="26" viewBox="0 0 26 26"><text x="1" y="11" font-size="12" font-weight="bold" font-family="Liberation Serif" fill="#b4b4b4">T</text><rect x="14" y="1" width="11" height="10" fill="#b4b4b4"/><path d="M16 4 H23 M16 6.5 H23" stroke="#444" stroke-width="0.8"/><rect x="1" y="14" width="11" height="10" fill="#b4b4b4"/><path d="M2 23 L6 18 L9 21 L11 19" stroke="#444" fill="none"/><rect x="14" y="14" width="11" height="10" fill="#8a8a8a"/></svg>
<div class="t" style="left:-186px;width:600px;text-align:center;top:980px;font-size:9.5px;color:#cfcfcf;">Component</div>
<svg class="a" style="left:181px;top:956px" width="26" height="26" viewBox="0 0 26 26"><path d="M13 1 V15 M7 10 L13 16 L19 10" stroke="#b4b4b4" stroke-width="2.2" fill="none"/><path d="M1 17 V23 H25 V17" stroke="#b4b4b4" stroke-width="2.2" fill="none"/></svg>
<div class="t" style="left:-106px;width:600px;text-align:center;top:980px;font-size:9.5px;color:#cfcfcf;">Loader</div>
<svg class="a" style="left:261px;top:956px" width="26" height="26" viewBox="0 0 26 26"><rect x="3.5" y="1.5" width="19" height="23" stroke="#b4b4b4" stroke-width="1.5" fill="none"/><path d="M13 2 V24 M4 8 H22 M4 13 H22 M4 18 H22" stroke="#b4b4b4" stroke-width="1.3"/></svg>
<div class="t" style="left:-26px;width:600px;text-align:center;top:980px;font-size:9.5px;color:#cfcfcf;">Repeater</div>
<div class="a" style="left:73px;top:1016px;width:350px;height:1px;background:#1c1c1c;"></div>
<svg class="a" style="left:75px;top:1023px;" width="10" height="7" viewBox="0 0 10 7"><path d="M0.5 0.5 H9.5 L5 6 Z" fill="#e0e0e0"/></svg>
<div class="t" style="left:91px;top:1017px;font-size:12.7px;color:#e2e2e2;transform:scaleX(0.9);transform-origin:0 0;">NONE (2)</div>
<svg class="a" style="left:101px;top:1051px" width="26" height="26" viewBox="0 0 26 26"><circle cx="13" cy="5" r="3.5" stroke="#b4b4b4" stroke-width="1.5" fill="none"/><circle cx="5.5" cy="12.5" r="3.5" stroke="#b4b4b4" stroke-width="1.5" fill="none"/><circle cx="20.5" cy="12.5" r="3.5" stroke="#b4b4b4" stroke-width="1.5" fill="none"/><circle cx="13" cy="20" r="3.5" stroke="#b4b4b4" stroke-width="1.5" fill="none"/></svg>
<div class="t" style="left:-186px;width:600px;text-align:center;top:1075px;font-size:9.5px;color:#cfcfcf;">Keyframe</div>
<svg class="a" style="left:181px;top:1051px" width="26" height="26" viewBox="0 0 26 26"><circle cx="13" cy="5" r="3.5" stroke="#b4b4b4" stroke-width="1.5" fill="none"/><circle cx="5.5" cy="12.5" r="3.5" stroke="#b4b4b4" stroke-width="1.5" fill="none"/><circle cx="20.5" cy="12.5" r="3.5" stroke="#b4b4b4" stroke-width="1.5" fill="none"/><circle cx="13" cy="20" r="3.5" stroke="#b4b4b4" stroke-width="1.5" fill="none"/></svg>
<div class="t" style="left:-106px;width:600px;text-align:center;top:1075px;font-size:9.5px;color:#cfcfcf;">KeyframeGroup</div>
<div class="a" style="left:68px;top:1110px;width:360px;height:30px;background:#333333;"></div>
<div class="a" style="left:68px;top:1140px;width:360px;height:5px;background:#292929;"></div>
<div class="t" style="left:70px;top:1116px;font-size:15px;color:#e0e0e0;transform:scaleX(0.87);transform-origin:0 0;">CIRCLES</div>
<div class="a" style="left:428px;top:76px;width:1px;height:1069px;background:#080808;"></div>
<div class="a" style="left:429px;top:76px;width:1079px;height:17px;background:#2b2b2b;"></div>
<div class="a" style="left:429px;top:76px;width:72px;height:17px;background:#57b9fc;"></div>
<div class="a" style="left:501px;top:76px;width:77px;height:17px;background:#1e1e1e;"></div>
<div class="a" style="left:578px;top:76px;width:1px;height:17px;background:#3c3c3c;"></div>
<div class="t" style="left:165px;width:600px;text-align:center;top:75px;font-size:12.7px;color:#1c1c1c;">2D</div>
<div class="t" style="left:240px;width:600px;text-align:center;top:75px;font-size:12.7px;color:#e8e8e8;">Code</div>
<div class="a" style="left:429px;top:93px;width:1079px;height:2px;background:#57b9fc;"></div>
<div class="a" style="left:429px;top:95px;width:1079px;height:8px;background:#2b2b2b;"></div>
<div class="a" style="left:429px;top:103px;width:1079px;height:24px;background:#3f3f3f;"></div>
<div class="a" style="left:430px;top:104px;width:100px;height:23px;background:#373737;border:1px solid #2e2e2e;border-bottom:none;border-radius:3px 3px 0 0;box-sizing:border-box;"></div>
<div class="a" style="left:530px;top:104px;width:100px;height:23px;background:#373737;border:1px solid #2e2e2e;border-bottom:none;border-radius:3px 3px 0 0;box-sizing:border-box;"></div>
<div class="t" style="left:433px;top:109px;font-size:9.8px;color:#8c8c8c;">Override Width</div>
<div class="t" style="left:533px;top:109px;font-size:9.8px;color:#8c8c8c;">Override Height</div>
<svg class="a" style="left:1242px;top:109px;" width="12" height="12" viewBox="0 0 12 12"><rect x="0" y="0" width="12" height="12" fill="#000"/><rect x="2" y="2" width="4" height="4" fill="#fff"/><rect x="6" y="6" width="4" height="4" fill="#fff"/></svg>
<svg class="a" style="left:1264px;top:110px;" width="10" height="14" viewBox="0 0 10 14"><path d="M5 1 L9 5 H1 Z M5 13 L9 9 H1 Z" fill="#c8c8c8"/></svg>
<svg class="a" style="left:1283px;top:109px;" width="18" height="18" viewBox="0 0 18 18"><circle cx="7" cy="7" r="6" stroke="#e0e0e0" stroke-width="1.3" fill="none"/><path d="M11.5 11.5 L16 16 M4 7 H10 M7 4 V10" stroke="#e0e0e0" stroke-width="1.3" fill="none"/></svg>
<svg class="a" style="left:1312px;top:109px;" width="18" height="18" viewBox="0 0 18 18"><circle cx="7" cy="7" r="6" stroke="#e0e0e0" stroke-width="1.3" fill="none"/><path d="M11.5 11.5 L16 16 M4 7 H10" stroke="#e0e0e0" stroke-width="1.3" fill="none"/></svg>
<div class="a" style="left:1338px;top:106px;width:61px;height:20px;background:#2f2f2f;"></div>
<div class="t" style="left:1341px;top:108px;font-size:12.7px;color:#d4d4d4;">154 %</div>
<svg class="a" style="left:1406px;top:114px;" width="10" height="6" viewBox="0 0 10 6"><path d="M0 0 H10 L5 5 Z" fill="#d0d0d0"/></svg>
<svg class="a" style="left:1424px;top:108px;" width="18" height="18" viewBox="0 0 18 18"><path d="M2 6 V4 A2 2 0 0 1 4 2 H6 M12 2 H14 A2 2 0 0 1 16 4 V6 M16 12 V14 A2 2 0 0 1 14 16 H12 M6 16 H4 A2 2 0 0 1 2 14 V12" stroke="#e0e0e0" stroke-width="1.3" fill="none"/><path d="M8 2 H10 M2 8 V10 M16 8 V10 M8 16 H10" stroke="#e0e0e0" stroke-width="1.3"/></svg>
<svg class="a" style="left:1453px;top:108px;" width="18" height="18" viewBox="0 0 18 18"><path d="M2 6 V4 A2 2 0 0 1 4 2 H6 M12 2 H14 A2 2 0 0 1 16 4 V6 M16 12 V14 A2 2 0 0 1 14 16 H12 M6 16 H4 A2 2 0 0 1 2 14 V12" stroke="#e0e0e0" stroke-width="1.3" fill="none"/><path d="M8 2 H10 M2 8 V10 M16 8 V10 M8 16 H10" stroke="#e0e0e0" stroke-width="1.3"/><rect x="6.5" y="6.5" width="5" height="5" stroke="#e0e0e0" stroke-width="1.3" fill="none"/></svg>
<svg class="a" style="left:1482px;top:107px;" width="18" height="20" viewBox="0 0 18 20"><path d="M15 11 A6.5 6.5 0 1 1 9 4.5" stroke="#e0e0e0" stroke-width="1.3" fill="none"/><path d="M8 1.5 L12.5 4.5 L8 7.5 Z" fill="#e0e0e0"/></svg>
<div class="a" style="left:429px;top:127px;width:1065px;height:808px;background:#2a2a2a;"></div>
<svg class="a" style="left:429px;top:127px" width="1065" height="808" viewBox="0 0 1065 808">
<defs><pattern id="chk" x="193" y="129" width="61.408" height="61.408" patternUnits="userSpaceOnUse">
<rect width="61.408" height="61.408" fill="#ffffff"/><rect width="30.704" height="30.704" fill="#d9d9d9"/><rect x="30.704" y="30.704" width="30.704" height="30.704" fill="#d9d9d9"/></pattern></defs>
<rect x="193" y="129" width="2000" height="2000" fill="url(#chk)"/>
<circle cx="231.38" cy="167.38" r="34.54" fill="#ff0000" stroke="#000" stroke-width="7.68"/><circle cx="323.49" cy="167.38" r="34.54" fill="#c0c0c0" stroke="#000" stroke-width="7.68"/><circle cx="415.60" cy="167.38" r="34.54" fill="#c0c0c0" stroke="#000" stroke-width="7.68"/><circle cx="507.72" cy="167.38" r="34.54" fill="#c0c0c0" stroke="#000" stroke-width="7.68"/><circle cx="599.83" cy="167.38" r="34.54" fill="#c0c0c0" stroke="#000" stroke-width="7.68"/><circle cx="691.94" cy="167.38" r="34.54" fill="#c0c0c0" stroke="#000" stroke-width="7.68"/><circle cx="784.05" cy="167.38" r="34.54" fill="#c0c0c0" stroke="#000" stroke-width="7.68"/><circle cx="876.16" cy="167.38" r="34.54" fill="#c0c0c0" stroke="#000" stroke-width="7.68"/><circle cx="968.28" cy="167.38" r="34.54" fill="#c0c0c0" stroke="#000" stroke-width="7.68"/><circle cx="1060.39" cy="167.38" r="34.54" fill="#c0c0c0" stroke="#000" stroke-width="7.68"/><circle cx="231.38" cy="259.49" r="34.54" fill="#e6d900" stroke="#000" stroke-width="7.68"/><circle cx="323.49" cy="259.49" r="34.54" fill="#c0c0c0" stroke="#000" stroke-width="7.68"/><circle cx="415.60" cy="259.49" r="34.54" fill="#c0c0c0" stroke="#000" stroke-width="7.68"/><circle cx="507.72" cy="259.49" r="34.54" fill="#c0c0c0" stroke="#000" stroke-width="7.68"/><circle cx="599.83" cy="259.49" r="34.54" fill="#c0c0c0" stroke="#000" stroke-width="7.68"/><circle cx="691.94" cy="259.49" r="34.54" fill="#c0c0c0" stroke="#000" stroke-width="7.68"/><circle cx="784.05" cy="259.49" r="34.54" fill="#c0c0c0" stroke="#000" stroke-width="7.68"/><circle cx="876.16" cy="259.49" r="34.54" fill="#c0c0c0" stroke="#000" stroke-width="7.68"/><circle cx="968.28" cy="259.49" r="34.54" fill="#c0c0c0" stroke="#000" stroke-width="7.68"/><circle cx="1060.39" cy="259.49" r="34.54" fill="#c0c0c0" stroke="#000" stroke-width="7.68"/><circle cx="231.38" cy="351.60" r="34.54" fill="#52f906" stroke="#000" stroke-width="7.68"/><circle cx="323.49" cy="351.60" r="34.54" fill="#c0c0c0" stroke="#000" stroke-width="7.68"/><circle cx="415.60" cy="351.60" r="34.54" fill="#c0c0c0" stroke="#000" stroke-width="7.68"/><circle cx="507.72" cy="351.60" r="34.54" fill="#c0c0c0" stroke="#000" stroke-width="7.68"/><circle cx="599.83" cy="351.60" r="34.54" fill="#c0c0c0" stroke="#000" stroke-width="7.68"/><circle cx="691.94" cy="351.60" r="34.54" fill="#c0c0c0" stroke="#000" stroke-width="7.68"/><circle cx="784.05" cy="351.60" r="34.54" fill="#c0c0c0" stroke="#000" stroke-width="7.68"/><circle cx="876.16" cy="351.60" r="34.54" fill="#c0c0c0" stroke="#000" stroke-width="7.68"/><circle cx="968.28" cy="351.60" r="34.54" fill="#c0c0c0" stroke="#000" stroke-width="7.68"/><circle cx="1060.39" cy="351.60" r="34.54" fill="#c0c0c0" stroke="#000" stroke-width="7.68"/><circle cx="231.38" cy="443.72" r="34.54" fill="#c0c0c0" stroke="#000" stroke-width="7.68"/><circle cx="323.49" cy="443.72" r="34.54" fill="#c0c0c0" stroke="#000" stroke-width="7.68"/><circle cx="415.60" cy="443.72" r="34.54" fill="#c0c0c0" stroke="#000" stroke-width="7.68"/><circle cx="507.72" cy="443.72" r="34.54" fill="#c0c0c0" stroke="#000" stroke-width="7.68"/><circle cx="599.83" cy="443.72" r="34.54" fill="#c0c0c0" stroke="#000" stroke-width="7.68"/><circle cx="691.94" cy="443.72" r="34.54" fill="#c0c0c0" stroke="#000" stroke-width="7.68"/><circle cx="784.05" cy="443.72" r="34.54" fill="#c0c0c0" stroke="#000" stroke-width="7.68"/><circle cx="876.16" cy="443.72" r="34.54" fill="#c0c0c0" stroke="#000" stroke-width="7.68"/><circle cx="968.28" cy="443.72" r="34.54" fill="#c0c0c0" stroke="#000" stroke-width="7.68"/><circle cx="1060.39" cy="443.72" r="34.54" fill="#c0c0c0" stroke="#000" stroke-width="7.68"/><circle cx="231.38" cy="535.83" r="34.54" fill="#c0c0c0" stroke="#000" stroke-width="7.68"/><circle cx="323.49" cy="535.83" r="34.54" fill="#c0c0c0" stroke="#000" stroke-width="7.68"/><circle cx="415.60" cy="535.83" r="34.54" fill="#c0c0c0" stroke="#000" stroke-width="7.68"/><circle cx="507.72" cy="535.83" r="34.54" fill="#c0c0c0" stroke="#000" stroke-width="7.68"/><circle cx="599.83" cy="535.83" r="34.54" fill="#c0c0c0" stroke="#000" stroke-width="7.68"/><circle cx="691.94" cy="535.83" r="34.54" fill="#c0c0c0" stroke="#000" stroke-width="7.68"/><circle cx="784.05" cy="535.83" r="34.54" fill="#c0c0c0" stroke="#000" stroke-width="7.68"/><circle cx="876.16" cy="535.83" r="34.54" fill="#c0c0c0" stroke="#000" stroke-width="7.68"/><circle cx="968.28" cy="535.83" r="34.54" fill="#c0c0c0" stroke="#000" stroke-width="7.68"/><circle cx="1060.39" cy="535.83" r="34.54" fill="#c0c0c0" stroke="#000" stroke-width="7.68"/><circle cx="231.38" cy="627.94" r="34.54" fill="#c0c0c0" stroke="#000" stroke-width="7.68"/><circle cx="323.49" cy="627.94" r="34.54" fill="#c0c0c0" stroke="#000" stroke-width="7.68"/><circle cx="415.60" cy="627.94" r="34.54" fill="#c0c0c0" stroke="#000" stroke-width="7.68"/><circle cx="507.72" cy="627.94" r="34.54" fill="#c0c0c0" stroke="#000" stroke-width="7.68"/><circle cx="599.83" cy="627.94" r="34.54" fill="#c0c0c0" stroke="#000" stroke-width="7.68"/><circle cx="691.94" cy="627.94" r="34.54" fill="#c0c0c0" stroke="#000" stroke-width="7.68"/><circle cx="784.05" cy="627.94" r="34.54" fill="#c0c0c0" stroke="#000" stroke-width="7.68"/><circle cx="876.16" cy="627.94" r="34.54" fill="#c0c0c0" stroke="#000" stroke-width="7.68"/><circle cx="968.28" cy="627.94" r="34.54" fill="#c0c0c0" stroke="#000" stroke-width="7.68"/><circle cx="1060.39" cy="627.94" r="34.54" fill="#c0c0c0" stroke="#000" stroke-width="7.68"/><circle cx="231.38" cy="720.05" r="34.54" fill="#c0c0c0" stroke="#000" stroke-width="7.68"/><circle cx="323.49" cy="720.05" r="34.54" fill="#c0c0c0" stroke="#000" stroke-width="7.68"/><circle cx="415.60" cy="720.05" r="34.54" fill="#c0c0c0" stroke="#000" stroke-width="7.68"/><circle cx="507.72" cy="720.05" r="34.54" fill="#c0c0c0" stroke="#000" stroke-width="7.68"/><circle cx="599.83" cy="720.05" r="34.54" fill="#c0c0c0" stroke="#000" stroke-width="7.68"/><circle cx="691.94" cy="720.05" r="34.54" fill="#c0c0c0" stroke="#000" stroke-width="7.68"/><circle cx="784.05" cy="720.05" r="34.54" fill="#c0c0c0" stroke="#000" stroke-width="7.68"/><circle cx="876.16" cy="720.05" r="34.54" fill="#c0c0c0" stroke="#000" stroke-width="7.68"/><circle cx="968.28" cy="720.05" r="34.54" fill="#c0c0c0" stroke="#000" stroke-width="7.68"/><circle cx="1060.39" cy="720.05" r="34.54" fill="#c0c0c0" stroke="#000" stroke-width="7.68"/><circle cx="231.38" cy="812.16" r="34.54" fill="#c0c0c0" stroke="#000" stroke-width="7.68"/><circle cx="323.49" cy="812.16" r="34.54" fill="#c0c0c0" stroke="#000" stroke-width="7.68"/><circle cx="415.60" cy="812.16" r="34.54" fill="#c0c0c0" stroke="#000" stroke-width="7.68"/><circle cx="507.72" cy="812.16" r="34.54" fill="#c0c0c0" stroke="#000" stroke-width="7.68"/><circle cx="599.83" cy="812.16" r="34.54" fill="#c0c0c0" stroke="#000" stroke-width="7.68"/><circle cx="691.94" cy="812.16" r="34.54" fill="#c0c0c0" stroke="#000" stroke-width="7.68"/><circle cx="784.05" cy="812.16" r="34.54" fill="#c0c0c0" stroke="#000" stroke-width="7.68"/><circle cx="876.16" cy="812.16" r="34.54" fill="#c0c0c0" stroke="#000" stroke-width="7.68"/><circle cx="968.28" cy="812.16" r="34.54" fill="#c0c0c0" stroke="#000" stroke-width="7.68"/><circle cx="1060.39" cy="812.16" r="34.54" fill="#c0c0c0" stroke="#000" stroke-width="7.68"/>
<path d="M191.5 900 V127.5 H1065" stroke="#3d9bf0" stroke-width="1" stroke-dasharray="2.8 1.8" fill="none"/>
<rect x="192.5" y="313.5" width="77" height="76" stroke="#57b0fc" stroke-width="1" fill="none"/>
</svg>
<div class="a" style="left:618px;top:437px;width:6px;height:6px;background:#ffffff;border:1px solid #57b0fc;box-sizing:border-box;"></div>
<div class="a" style="left:618px;top:475px;width:6px;height:6px;background:#ffffff;border:1px solid #57b0fc;box-sizing:border-box;"></div>
<div class="a" style="left:618px;top:513px;width:6px;height:6px;background:#ffffff;border:1px solid #57b0fc;box-sizing:border-box;"></div>
<div class="a" style="left:657px;top:437px;width:6px;height:6px;background:#ffffff;border:1px solid #57b0fc;box-sizing:border-box;"></div>
<div class="a" style="left:657px;top:513px;width:6px;height:6px;background:#ffffff;border:1px solid #57b0fc;box-sizing:border-box;"></div>
<div class="a" style="left:696px;top:437px;width:6px;height:6px;background:#ffffff;border:1px solid #57b0fc;box-sizing:border-box;"></div>
<div class="a" style="left:696px;top:475px;width:6px;height:6px;background:#ffffff;border:1px solid #57b0fc;box-sizing:border-box;"></div>
<div class="a" style="left:696px;top:513px;width:6px;height:6px;background:#ffffff;border:1px solid #57b0fc;box-sizing:border-box;"></div>
<div class="a" style="left:621px;top:422px;width:75px;height:18px;background:#57b0fc;"></div>
<div class="t" style="left:626px;top:423px;font-size:12.5px;color:#ffffff;">element_64</div>
<div class="a" style="left:1494px;top:127px;width:14px;height:808px;background:#2a2a2a;"></div>
<div class="a" style="left:1494px;top:136px;width:14px;height:799px;background:#4a4a4a;"></div>
<div class="a" style="left:1495px;top:137px;width:12px;height:13px;background:#555555;border:1px solid #5e5e5e;box-sizing:border-box;"></div>
<svg class="a" style="left:1496px;top:139px;" width="10" height="8" viewBox="0 0 10 8"><path d="M1 6 H9 L5 2 Z" fill="#8a8a8a"/></svg>
<div class="a" style="left:1495px;top:921px;width:12px;height:13px;background:#555555;border:1px solid #5e5e5e;box-sizing:border-box;"></div>
<svg class="a" style="left:1496px;top:924px;" width="10" height="8" viewBox="0 0 10 8"><path d="M1 2 H9 L5 6 Z" fill="#8a8a8a"/></svg>
<div class="a" style="left:1495px;top:525px;width:12px;height:27px;background:#535353;border:1px solid #646464;box-sizing:border-box;"></div>
<div class="a" style="left:429px;top:935px;width:1079px;height:1px;background:#2a2a2a;"></div>
<div class="a" style="left:429px;top:936px;width:1065px;height:13px;background:#4a4a4a;"></div>
<div class="a" style="left:1494px;top:936px;width:14px;height:13px;background:#2a2a2a;"></div>
<div class="a" style="left:430px;top:937px;width:13px;height:12px;background:#555555;border:1px solid #5e5e5e;box-sizing:border-box;"></div>
<svg class="a" style="left:431px;top:939px;" width="10" height="8" viewBox="0 0 10 8"><path d="M7 1 V7 L3 4 Z" fill="#8a8a8a"/></svg>
<div class="a" style="left:1480px;top:937px;width:13px;height:12px;background:#555555;border:1px solid #5e5e5e;box-sizing:border-box;"></div>
<svg class="a" style="left:1482px;top:939px;" width="10" height="8" viewBox="0 0 10 8"><path d="M3 1 V7 L7 4 Z" fill="#8a8a8a"/></svg>
<div class="a" style="left:954px;top:937px;width:27px;height:12px;background:#535353;border:1px solid #646464;box-sizing:border-box;"></div>
<div class="a" style="left:429px;top:949px;width:1079px;height:1px;background:#0e0e0e;"></div>
<div class="a" style="left:429px;top:950px;width:1079px;height:17px;background:#2b2b2b;"></div>
<div class="a" style="left:429px;top:950px;width:88px;height:17px;background:#4e4e4e;"></div>
<div class="t" style="left:173px;width:600px;text-align:center;top:949px;font-size:12.7px;color:#dedede;">Output</div>
<div class="a" style="left:429px;top:967px;width:1079px;height:2px;background:#474747;"></div>
<div class="a" style="left:429px;top:969px;width:1079px;height:176px;background:#2a2a2a;"></div>
<div class="a" style="left:1508px;top:76px;width:1px;height:1069px;background:#0e0e0e;"></div>
<div class="a" style="left:1509px;top:76px;width:360px;height:1069px;background:#2a2a2a;"></div>
<div class="a" style="left:1509px;top:76px;width:360px;height:17px;background:#2b2b2b;"></div>
<div class="a" style="left:1509px;top:76px;width:105px;height:17px;background:#4e4e4e;"></div>
<div class="t" style="left:1261px;width:600px;text-align:center;top:75px;font-size:12.7px;color:#dedede;">Properties</div>
<div class="a" style="left:1509px;top:93px;width:360px;height:2px;background:#474747;"></div>
<div class="a" style="left:1509px;top:95px;width:360px;height:22px;background:#333333;"></div>
<svg class="a" style="left:1516px;top:103px;" width="10" height="7" viewBox="0 0 10 7"><path d="M0.5 0.5 H9.5 L5 6 Z" fill="#e0e0e0"/></svg>
<div class="t" style="left:1532px;top:98px;font-size:12.7px;color:#e0e0e0;transform:scaleX(0.9);transform-origin:0 0;">COMPONENT</div>
<div class="t" style="left:1272px;width:300px;text-align:right;top:133px;font-size:12.7px;color:#dcdcdc;">Type</div>
<div class="a" style="left:1613px;top:128px;width:196px;height:28px;background:#2a2a2a;border:1px solid #1d1d1d;box-sizing:border-box;"></div>
<div class="t" style="left:1619px;top:133px;font-size:12.7px;color:#dcdcdc;">Circle1</div>
<div class="t" style="left:1272px;width:300px;text-align:right;top:167px;font-size:12.7px;color:#dcdcdc;">ID</div>
<div class="a" style="left:1613px;top:162px;width:196px;height:28px;background:#2a2a2a;border:1px solid #1d1d1d;box-sizing:border-box;"></div>
<div class="t" style="left:1619px;top:167px;font-size:12.7px;color:#dcdcdc;">element_64</div>
<div class="t" style="left:1837px;top:167px;font-size:14px;color:#707070;">@</div>
<div class="t" style="left:1272px;width:300px;text-align:right;top:201px;font-size:12.7px;color:#dcdcdc;">State</div>
<div class="a" style="left:1613px;top:196px;width:196px;height:28px;background:#2a2a2a;border:1px solid #1d1d1d;box-sizing:border-box;"></div>
<div class="t" style="left:1619px;top:201px;font-size:12.7px;color:#dcdcdc;">base state</div>
<svg class="a" style="left:1786px;top:204px;" width="14" height="10" viewBox="0 0 14 10"><path d="M1.5 2 L7 7.5 L12.5 2" stroke="#dcdcdc" stroke-width="1.5" fill="none"/></svg>
<div class="a" style="left:1613px;top:230px;width:196px;height:28px;background:#2a2a2a;border:1px solid #1d1d1d;box-sizing:border-box;"></div>
<div class="t" style="left:1411px;width:600px;text-align:center;top:235px;font-size:12.7px;color:#dcdcdc;">Add Annotation</div>
<div class="a" style="left:1509px;top:269px;width:360px;height:21px;background:#333333;"></div>
<svg class="a" style="left:1516px;top:276px;" width="10" height="7" viewBox="0 0 10 7"><path d="M0.5 0.5 H9.5 L5 6 Z" fill="#e0e0e0"/></svg>
<div class="t" style="left:1532px;top:271px;font-size:12.7px;color:#e0e0e0;transform:scaleX(0.9);transform-origin:0 0;">LOCAL CUSTOM PROPERTIES</div>
<div class="a" style="left:1613px;top:300px;width:28px;height:28px;background:#2a2a2a;border:1px solid #1d1d1d;box-sizing:border-box;"></div>
<svg class="a" style="left:1619px;top:306px;" width="16" height="16" viewBox="0 0 16 16"><path d="M8 2.5 V13.5 M2.5 8 H13.5" stroke="#f0f0f0" stroke-width="1.8"/></svg>
<div class="a" style="left:1509px;top:339px;width:360px;height:21px;background:#333333;"></div>
<svg class="a" style="left:1516px;top:346px;" width="10" height="7" viewBox="0 0 10 7"><path d="M0.5 0.5 H9.5 L5 6 Z" fill="#e0e0e0"/></svg>
<div class="t" style="left:1532px;top:341px;font-size:12.7px;color:#e0e0e0;transform:scaleX(0.9);transform-origin:0 0;">GEOMETRY - 2D</div>
<div class="t" style="left:1272px;width:300px;text-align:right;top:375px;font-size:12.7px;color:#dcdcdc;">Position</div>
<div class="a" style="left:1613px;top:370px;width:75px;height:28px;background:#2a2a2a;border:1px solid #1d1d1d;box-sizing:border-box;"></div>
<div class="t" style="left:1381px;width:300px;text-align:right;top:375px;font-size:12.7px;color:#5cb0f0;">0</div>
<div class="t" style="left:1695px;top:375px;font-size:12.7px;color:#dcdcdc;">X</div>
<div class="a" style="left:1734px;top:370px;width:75px;height:28px;background:#2a2a2a;border:1px solid #1d1d1d;box-sizing:border-box;"></div>
<div class="t" style="left:1502px;width:300px;text-align:right;top:375px;font-size:12.7px;color:#5cb0f0;">120</div>
<div class="t" style="left:1816px;top:375px;font-size:12.7px;color:#dcdcdc;">Y</div>
<div class="t" style="left:1272px;width:300px;text-align:right;top:409px;font-size:12.7px;color:#dcdcdc;">Size</div>
<div class="a" style="left:1613px;top:404px;width:75px;height:28px;background:#2a2a2a;border:1px solid #1d1d1d;box-sizing:border-box;"></div>
<div class="t" style="left:1381px;width:300px;text-align:right;top:409px;font-size:12.7px;color:#5cb0f0;">50</div>
<div class="t" style="left:1694px;top:409px;font-size:12.7px;color:#dcdcdc;">W</div>
<div class="a" style="left:1734px;top:404px;width:75px;height:28px;background:#2a2a2a;border:1px solid #1d1d1d;box-sizing:border-box;"></div>
<div class="t" style="left:1502px;width:300px;text-align:right;top:409px;font-size:12.7px;color:#5cb0f0;">50</div>
<div class="t" style="left:1817px;top:409px;font-size:12.7px;color:#dcdcdc;">H</div>
<div class="t" style="left:1272px;width:300px;text-align:right;top:443px;font-size:12.7px;color:#dcdcdc;">Rotation</div>
<div class="a" style="left:1613px;top:438px;width:75px;height:28px;background:#2a2a2a;border:1px solid #1d1d1d;box-sizing:border-box;"></div>
<div class="t" style="left:1381px;width:300px;text-align:right;top:443px;font-size:12.7px;color:#dcdcdc;">0,00</div>
<div class="t" style="left:1698px;top:443px;font-size:12.7px;color:#dcdcdc;">°</div>
<div class="t" style="left:1272px;width:300px;text-align:right;top:477px;font-size:12.7px;color:#dcdcdc;">Scale</div>
<div class="a" style="left:1613px;top:472px;width:196px;height:28px;background:#2a2a2a;border:1px solid #1d1d1d;box-sizing:border-box;"></div>
<div class="t" style="left:1474px;width:300px;text-align:right;top:477px;font-size:12.7px;color:#dcdcdc;">1,00</div>
<div class="t" style="left:1816px;top:477px;font-size:12.7px;color:#dcdcdc;">%</div>
<svg class="a" style="left:1786px;top:481px;" width="14" height="10" viewBox="0 0 14 10"><path d="M1.5 2 L7 7.5 L12.5 2" stroke="#dcdcdc" stroke-width="1.5" fill="none"/></svg>
<div class="t" style="left:1272px;width:300px;text-align:right;top:511px;font-size:12.7px;color:#dcdcdc;">Z stack</div>
<div class="a" style="left:1613px;top:506px;width:75px;height:28px;background:#2a2a2a;border:1px solid #1d1d1d;box-sizing:border-box;"></div>
<div class="t" style="left:1381px;width:300px;text-align:right;top:511px;font-size:12.7px;color:#dcdcdc;">0</div>
<div class="t" style="left:1272px;width:300px;text-align:right;top:545px;font-size:12.7px;color:#dcdcdc;">Origin</div>
<div class="a" style="left:1613px;top:540px;width:29px;height:28px;background:#2a2a2a;border:1px solid #1d1d1d;box-sizing:border-box;"></div>
<div class="a" style="left:1623px;top:549px;width:9px;height:9px;background:#57b9fc;"></div>
<div class="a" style="left:1509px;top:579px;width:360px;height:21px;background:#333333;"></div>
<svg class="a" style="left:1516px;top:586px;" width="10" height="7" viewBox="0 0 10 7"><path d="M0.5 0.5 H9.5 L5 6 Z" fill="#e0e0e0"/></svg>
<div class="t" style="left:1532px;top:581px;font-size:12.7px;color:#e0e0e0;transform:scaleX(0.9);transform-origin:0 0;">VISIBILITY</div>
<div class="t" style="left:1272px;width:300px;text-align:right;top:615px;font-size:12.7px;color:#dcdcdc;">Visibility</div>
<div class="a" style="left:1613px;top:610px;width:29px;height:28px;background:#2a2a2a;border:1px solid #1d1d1d;box-sizing:border-box;"></div>
<svg class="a" style="left:1619px;top:617px;" width="16" height="14" viewBox="0 0 16 14"><path d="M2 7 L6 11 L14 3" stroke="#f0f0f0" stroke-width="1.8" fill="none"/></svg>
<div class="t" style="left:1648px;top:615px;font-size:12.7px;color:#dcdcdc;">Visible</div>
<div class="a" style="left:1734px;top:610px;width:29px;height:28px;background:#2a2a2a;border:1px solid #1d1d1d;box-sizing:border-box;"></div>
<div class="t" style="left:1769px;top:615px;font-size:12.7px;color:#dcdcdc;">Clip</div>
<div class="t" style="left:1272px;width:300px;text-align:right;top:649px;font-size:12.7px;color:#dcdcdc;">Opacity</div>
<div class="a" style="left:1613px;top:644px;width:196px;height:28px;background:#2a2a2a;border:1px solid #1d1d1d;box-sizing:border-box;"></div>
<div class="t" style="left:1474px;width:300px;text-align:right;top:649px;font-size:12.7px;color:#dcdcdc;">1,00</div>
<svg class="a" style="left:1786px;top:653px;" width="14" height="10" viewBox="0 0 14 10"><path d="M1.5 2 L7 7.5 L12.5 2" stroke="#dcdcdc" stroke-width="1.5" fill="none"/></svg>
<div class="a" style="left:1509px;top:687px;width:181px;height:25px;background:#57b9fc;"></div>
<div class="a" style="left:1690px;top:687px;width:178px;height:25px;background:#2a2a2a;border:1px solid #57b9fc;box-sizing:border-box;"></div>
<div class="t" style="left:1298px;width:600px;text-align:center;top:690px;font-size:12.7px;color:#2a2a2a;">Circle1</div>
<div class="t" style="left:1479px;width:600px;text-align:center;top:690px;font-size:12.7px;color:#57b9fc;">Layout</div>
<div class="t" style="left:1390px;width:600px;text-align:center;top:721px;font-size:12.7px;color:#dcdcdc;">This is an instance of a component</div>
<div class="a" style="left:1599px;top:749px;width:180px;height:28px;background:#2a2a2a;border:1px solid #1d1d1d;box-sizing:border-box;"></div>
<div class="t" style="left:1389px;width:600px;text-align:center;top:754px;font-size:12.7px;color:#dcdcdc;">Edit Component</div>
<div class="a" style="left:1509px;top:788px;width:360px;height:21px;background:#333333;"></div>
<svg class="a" style="left:1516px;top:795px;" width="10" height="7" viewBox="0 0 10 7"><path d="M0.5 0.5 H9.5 L5 6 Z" fill="#e0e0e0"/></svg>
<div class="t" style="left:1532px;top:790px;font-size:12.7px;color:#e0e0e0;transform:scaleX(0.9);transform-origin:0 0;">EXPOSED CUSTOM PROPERTIES</div>
<div class="t" style="left:1272px;width:300px;text-align:right;top:824px;font-size:12.7px;color:#dcdcdc;">border...</div>
<div class="a" style="left:1613px;top:819px;width:75px;height:29px;background:#000000;border:1px solid #1d1d1d;box-sizing:border-box;"></div>
<div class="a" style="left:1734px;top:819px;width:75px;height:28px;background:#2a2a2a;border:1px solid #1d1d1d;box-sizing:border-box;"></div>
<div class="t" style="left:1740px;top:824px;font-size:12.7px;color:#dcdcdc;">00000</div>
<svg class="a" style="left:1786px;top:824px;" width="16" height="16" viewBox="0 0 16 16"><rect x="5" y="5" width="9" height="9" rx="2" stroke="#e0e0e0" stroke-width="1.6" fill="none"/><path d="M2.5 10 V4 A1.5 1.5 0 0 1 4 2.5 H10" stroke="#e0e0e0" stroke-width="1.4" fill="none"/></svg>
<div class="t" style="left:1272px;width:300px;text-align:right;top:858px;font-size:12.7px;color:#dcdcdc;">border...</div>
<div class="a" style="left:1613px;top:853px;width:75px;height:28px;background:#2a2a2a;border:1px solid #1d1d1d;box-sizing:border-box;"></div>
<div class="t" style="left:1381px;width:300px;text-align:right;top:858px;font-size:12.7px;color:#dcdcdc;">5,00</div>
<div class="t" style="left:1272px;width:300px;text-align:right;top:892px;font-size:12.7px;color:#dcdcdc;">color</div>
<div class="a" style="left:1613px;top:887px;width:75px;height:29px;background:#52f906;border:1px solid #1d1d1d;box-sizing:border-box;"></div>
<div class="a" style="left:1734px;top:887px;width:75px;height:28px;background:#2a2a2a;border:1px solid #1d1d1d;box-sizing:border-box;"></div>
<div class="a" style="left:1740px;top:892px;width:35px;height:20px;overflow:hidden;"><div class="t" style="right:0;top:0;font-size:12.7px;color:#dcdcdc;">52f906</div></div>
<svg class="a" style="left:1786px;top:892px;" width="16" height="16" viewBox="0 0 16 16"><rect x="5" y="5" width="9" height="9" rx="2" stroke="#e0e0e0" stroke-width="1.6" fill="none"/><path d="M2.5 10 V4 A1.5 1.5 0 0 1 4 2.5 H10" stroke="#e0e0e0" stroke-width="1.4" fill="none"/></svg>
<div class="a" style="left:1509px;top:926px;width:360px;height:63px;background:#333333;"></div>
<div class="a" style="left:1509px;top:926px;width:360px;height:21px;background:#333333;"></div>
<svg class="a" style="left:1518px;top:931px;" width="8" height="10" viewBox="0 0 8 10"><path d="M1 1 V9 L6 5 Z" fill="#e0e0e0"/></svg>
<div class="t" style="left:1532px;top:927px;font-size:12.7px;color:#e0e0e0;transform:scaleX(0.9);transform-origin:0 0;">EFFECTS <span style="color:#5cb0f0">[BETA]</span></div>
<div class="a" style="left:1509px;top:947px;width:360px;height:21px;background:#333333;"></div>
<svg class="a" style="left:1518px;top:952px;" width="8" height="10" viewBox="0 0 8 10"><path d="M1 1 V9 L6 5 Z" fill="#e0e0e0"/></svg>
<div class="t" style="left:1532px;top:948px;font-size:12.7px;color:#e0e0e0;transform:scaleX(0.9);transform-origin:0 0;">ADVANCED</div>
<div class="a" style="left:1509px;top:968px;width:360px;height:21px;background:#333333;"></div>
<svg class="a" style="left:1518px;top:973px;" width="8" height="10" viewBox="0 0 8 10"><path d="M1 1 V9 L6 5 Z" fill="#e0e0e0"/></svg>
<div class="t" style="left:1532px;top:969px;font-size:12.7px;color:#e0e0e0;transform:scaleX(0.9);transform-origin:0 0;">LAYER</div>
<div class="a" style="left:68px;top:1145px;width:1801px;height:29px;background:#4f4c00;"></div>
<div class="a" style="left:68px;top:1145px;width:1801px;height:1px;background:#6d6a18;"></div>
<div class="t" style="left:72px;top:1151px;font-size:12.7px;color:#e2e2e2;">Would you like to take a quick UI tour? This tour highlights important user interface elements and shows how they are used. To take the tour later, select Help &gt; UI Tour.</div>
<div class="a" style="left:1623px;top:1148px;width:84px;height:23px;background:#4a4a4c;border:1px solid #2b2b2b;border-radius:3px;box-sizing:border-box;"></div>
<div class="t" style="left:1365px;width:600px;text-align:center;top:1151px;font-size:12.7px;color:#dedede;">Take UI Tour</div>
<div class="a" style="left:1715px;top:1148px;width:121px;height:23px;background:#4a4a4c;border:1px solid #2b2b2b;border-radius:3px;box-sizing:border-box;"></div>
<div class="t" style="left:1475px;width:600px;text-align:center;top:1151px;font-size:12.7px;color:#dedede;">Do Not Show Again</div>
<svg class="a" style="left:1846px;top:1152px;" width="16" height="16" viewBox="0 0 16 16"><path d="M3 3 L13 13 M13 3 L3 13" stroke="#e8e8e8" stroke-width="1.5"/></svg>
<div class="a" style="left:68px;top:1174px;width:1801px;height:26px;background:#404244;"></div>
<svg class="a" style="left:75px;top:1181px;" width="14" height="14" viewBox="0 0 14 14"><rect x="1" y="1" width="12" height="12" fill="none" stroke="#6a6a6a"/><rect x="1" y="1" width="4" height="12" fill="#6a6a6a"/></svg>
<div class="a" style="left:100px;top:1177px;width:201px;height:21px;background:#2f3033;"></div>
<svg class="a" style="left:105px;top:1179px;" width="18" height="18" viewBox="0 0 18 18"><circle cx="9.5" cy="6.5" r="4.5" stroke="#c0c0c0" stroke-width="1.4" fill="none"/><path d="M6.3 9.7 L2 14" stroke="#c0c0c0" stroke-width="1.6"/><path d="M10.5 13.5 L14.5 13.5 L12.5 15.5 Z" fill="#c0c0c0"/></svg>
<div class="t" style="left:127px;top:1179px;font-size:12.7px;color:#8a8a8a;">Type to locate (Ctrl+K)</div>
<div class="a" style="left:303px;top:1177px;width:1px;height:21px;background:#2a2a2a;"></div>
<div class="t" style="left:314px;top:1179px;font-size:12.7px;color:#d4d4d4;">1&nbsp;&nbsp;Issues</div>
<div class="t" style="left:380px;top:1179px;font-size:12.7px;color:#d4d4d4;">2&nbsp;&nbsp;Search Results</div>
<div class="t" style="left:492px;top:1179px;font-size:12.7px;color:#d4d4d4;">3&nbsp;&nbsp;Application Output</div>
<div class="t" style="left:630px;top:1179px;font-size:12.7px;color:#d4d4d4;">4&nbsp;&nbsp;Compile Output</div>
<div class="t" style="left:751px;top:1179px;font-size:12.7px;color:#d4d4d4;">5&nbsp;&nbsp;Terminal</div>
<div class="t" style="left:831px;top:1179px;font-size:12.7px;color:#d4d4d4;">6&nbsp;&nbsp;Version Control</div>
<div class="t" style="left:944px;top:1179px;font-size:12.7px;color:#d4d4d4;">10&nbsp;General Messages</div>
<svg class="a" style="left:1084px;top:1181px;" width="10" height="14" viewBox="0 0 10 14"><path d="M5 1 L9 5 H1 Z M5 13 L9 9 H1 Z" fill="#d0d0d0"/></svg>
<div class="a" style="left:1814px;top:1177px;width:24px;height:21px;background:#262626;"></div>
<svg class="a" style="left:1818px;top:1182px;" width="18" height="14" viewBox="0 0 18 14"><path d="M3 7 H15 V11 H3 Z" stroke="#e0e0e0" stroke-width="1.2" fill="none"/><path d="M9 1 L11 3.5 H7 Z" fill="#e0e0e0"/></svg>
<svg class="a" style="left:1849px;top:1181px;" width="14" height="14" viewBox="0 0 14 14"><rect x="2.5" y="1.5" width="11" height="11" fill="none" stroke="#6a6a6a"/><rect x="9" y="1" width="5" height="12" fill="#6a6a6a"/></svg></body></html>
